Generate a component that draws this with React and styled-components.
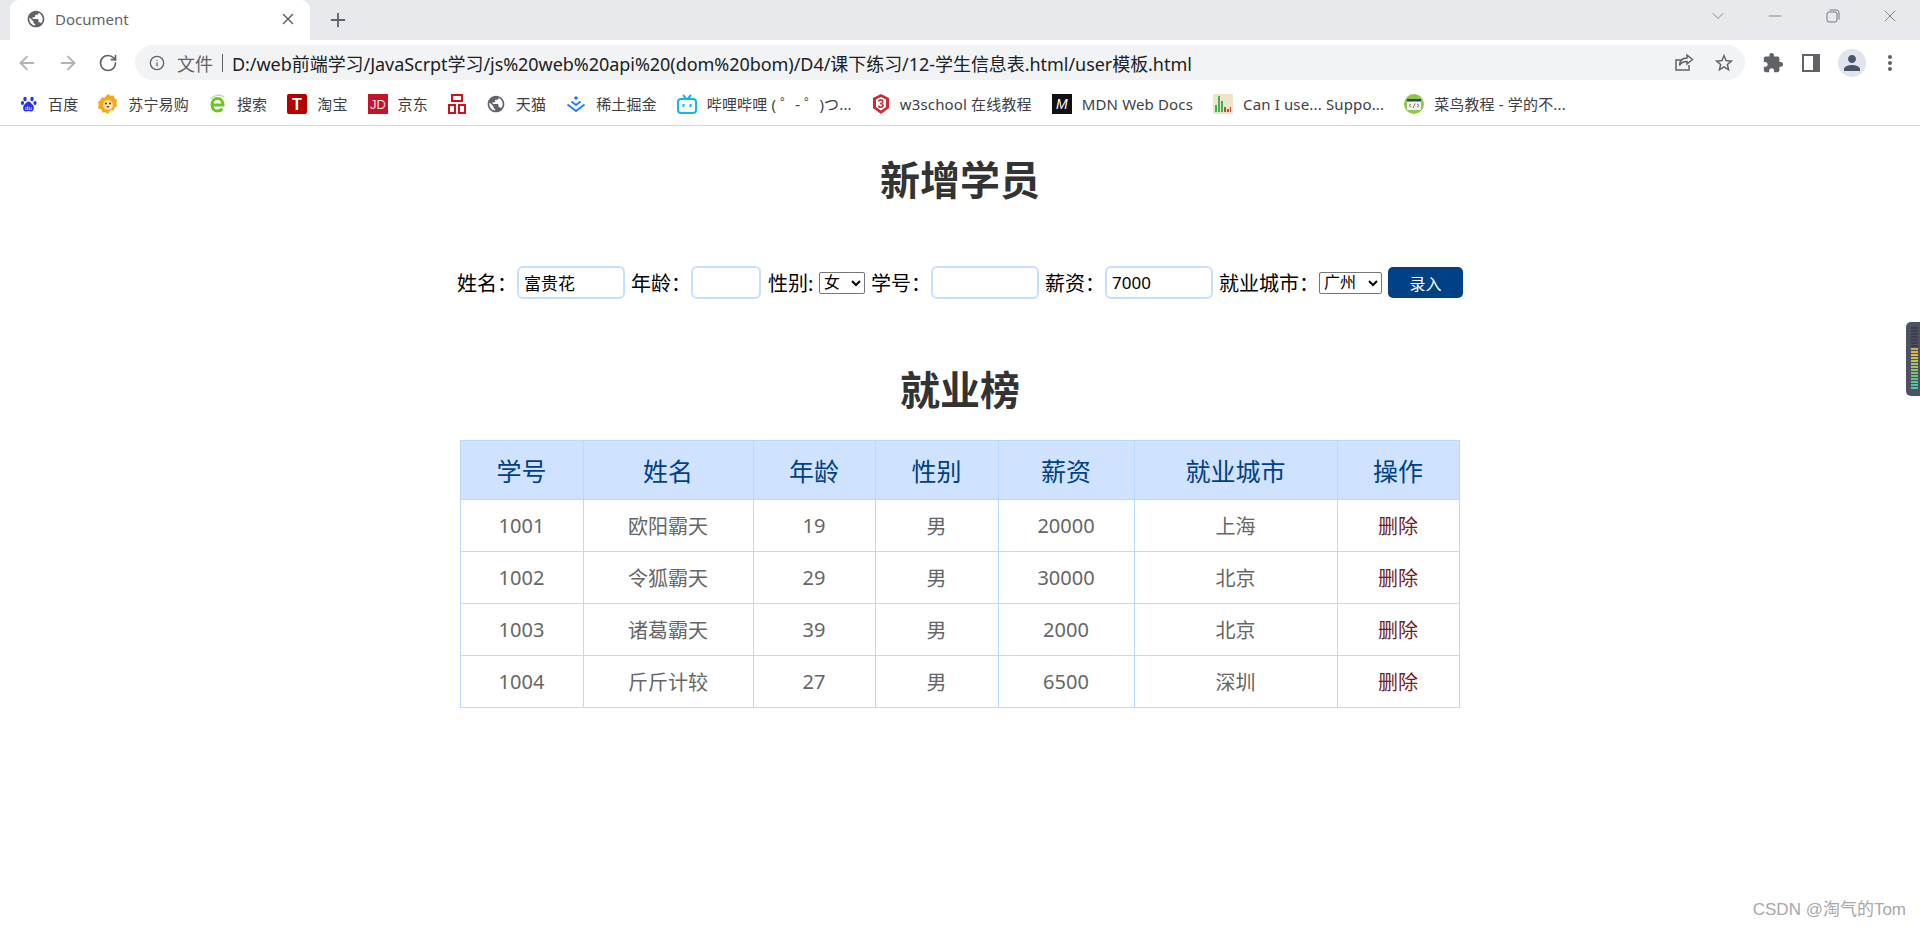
import React from 'react';
import styled, { createGlobalStyle } from 'styled-components';
import { ArrowLeft, ArrowRight, RotateCw, Info, Plus, X, ChevronDown, Minus } from 'lucide-react';
import { MdPublic, MdExtension, MdStarBorder, MdPerson, MdMoreVert } from 'react-icons/md';

const GlobalStyle = createGlobalStyle`
  html, body {
    margin: 0;
    height: 100%;
    overflow: hidden;
    background: #fff;
    font-family: "Noto Sans", "Noto Sans CJK SC", sans-serif;
  }
  * { box-sizing: border-box; }
`;

const Window = styled.div`
  position: relative;
  width: 1920px;
  height: 928px;
  overflow: hidden;
`;

const TabStrip = styled.div`
  display: flex;
  align-items: center;
  height: 40px;
  padding-left: 10px;
  background: #e7e9ed;
`;

const Tab = styled.div`
  display: flex;
  align-items: center;
  width: 300px;
  height: 40px;
  padding: 0 13px 3px 16px;
  background: #fff;
  border-radius: 9px 9px 0 0;
  color: #5f6368;
  font-size: 15px;
`;

const TabTitle = styled.span`
  flex: 1;
  margin-left: 9px;
`;

const NewTab = styled.div`
  display: flex;
  margin-left: 17px;
  color: #5f6368;
`;

const WindowControls = styled.div`
  display: flex;
  align-items: center;
  margin-left: auto;
  padding: 0 20px 8px 0;
  gap: 37px;
  color: #72767b;
`;

const RestoreSlot = styled.span`
  display: flex;
  margin: 0 3px 0 4px;
`;

const Toolbar = styled.div`
  display: flex;
  align-items: center;
  height: 45px;
  padding: 0 18px 0 16px;
  background: #fff;
`;

const NavButton = styled.div`
  display: flex;
  width: 22px;
  margin-right: ${p => p.$gap}px;
  color: ${p => (p.$off ? '#b1b3b6' : '#5f6368')};
`;

const Omnibox = styled.div`
  display: flex;
  align-items: center;
  width: 1610px;
  height: 35px;
  padding: 0 10px 0 14px;
  border-radius: 18px;
  background: #f1f3f4;
  color: #202124;
  font-size: 18px;
`;

const Scheme = styled.span`
  margin-left: 12px;
  color: #5f6368;
`;

const Divider = styled.span`
  width: 1px;
  height: 18px;
  margin: 0 9px 0 9px;
  background: #5f6368;
`;

const Url = styled.span`
  flex: 1;
  letter-spacing: -0.05px;
  white-space: nowrap;
`;

const OmniActions = styled.div`
  display: flex;
  align-items: center;
  gap: 19px;
  color: #5f6368;
`;

const ToolActions = styled.div`
  display: flex;
  align-items: center;
  margin-left: 17px;
  gap: 18px;
  color: #5f6368;
`;

const MoreButton = styled(MdMoreVert)`
  margin-left: -6px;
`;

const Avatar = styled.div`
  display: flex;
  align-items: center;
  justify-content: center;
  width: 28px;
  height: 28px;
  border-radius: 50%;
  background: #e1e4ea;
  color: #48546a;
`;

const BookmarkBar = styled.div`
  display: flex;
  align-items: center;
  height: 41px;
  padding: 0 0 3px 20px;
  gap: 20px;
  border-bottom: 1px solid #d5d6d8;
  background: #fff;
`;

const Bookmark = styled.div`
  display: flex;
  align-items: center;
  gap: 10px;
  color: #3c4043;
  font-size: 15px;
  letter-spacing: 0.15px;
  white-space: nowrap;
`;

const Page = styled.main`
  display: flex;
  flex-direction: column;
  align-items: center;
`;

const Title = styled.h1`
  margin: ${p => p.$top}px 0 ${p => p.$bottom}px;
  color: #333;
  font-size: 40px;
  font-weight: 700;
  line-height: 56px;
`;

const EntryForm = styled.form`
  display: flex;
  align-items: center;
  gap: 6px;
  height: 33px;
  color: #000;
  font-size: 20px;
`;

const FieldLabel = styled.label`
  width: ${p => p.$w}px;
  margin-left: ${p => p.$lead || 0}px;
  white-space: nowrap;
`;

const TextInput = styled.input`
  width: ${p => p.$w}px;
  height: 33px;
  padding: 0 5px;
  border: 2px solid #c5e0ff;
  border-radius: 6px;
  outline: none;
  color: #000;
  font: 17px "Noto Sans", "Noto Sans CJK SC", sans-serif;
`;

const Select = styled.select`
  width: ${p => p.$w}px;
  height: 22px;
  padding: 0;
  border: 1px solid #767676;
  border-radius: 2px;
  background: #fff;
  color: #000;
  font: 16px "Liberation Sans", "Noto Sans CJK SC", sans-serif;
`;

const SubmitButton = styled.button`
  width: 75px;
  height: 31px;
  border: none;
  border-radius: 5px;
  background: #004085;
  color: #fff;
  font: 16px "Noto Sans", "Noto Sans CJK SC", sans-serif;
`;

const Table = styled.table`
  width: 999px;
  margin-right: 1px;
  table-layout: fixed;
  border-collapse: collapse;
  text-align: center;
`;

const Column = styled.col`
  width: ${p => p.$w}px;
`;

const HeadCell = styled.th`
  height: 59px;
  padding: 0;
  border: 1px solid #b8daff;
  background: #cfe2ff;
  color: #004085;
  font-size: 25px;
  font-weight: 400;
`;

const Cell = styled.td`
  height: 52px;
  padding: 0;
  border: 1px solid #b8daff;
  color: #666;
  font-size: 20px;
`;

const DeleteLink = styled.a`
  color: #721c24;
`;

const Watermark = styled.div`
  position: absolute;
  right: 14px;
  bottom: 8px;
  color: #a8a8a8;
  font: 17px "Liberation Sans", "Noto Sans CJK SC", sans-serif;
`;

const SideWidget = styled.div`
  position: absolute;
  top: 322px;
  right: 0;
  display: flex;
  flex-direction: column;
  gap: 1px;
  width: 14px;
  height: 74px;
  padding: 5px 2px 0 5px;
  border-radius: 5px 0 0 5px;
  background: #4c5260;
`;

const Level = styled.span`
  height: 2px;
  background: ${p => p.$c};
`;

const levels = [
  '#3a3f4b', '#3a3f4b', '#3a3f4b', '#3a3f4b', '#3a3f4b', '#3a3f4b', '#3a3f4b',
  '#e0a93e', '#e3b23f', '#e0bb3f', '#c9c247', '#bfc54e', '#abc158', '#9dc35f',
  '#8ac168', '#79c472', '#6cc47c', '#5cc688', '#50c896', '#47caa4', '#44cbb0',
];

const BaiduIcon = () => (
  <svg width="18" height="18" viewBox="0 0 18 18" fill="#2932e1">
    <ellipse cx="5" cy="4" rx="1.7" ry="2.3" />
    <ellipse cx="12" cy="4" rx="1.7" ry="2.3" />
    <ellipse cx="2.500" cy="8" rx="1.6" ry="2" />
    <ellipse cx="15" cy="8" rx="1.6" ry="2" />
    <path d="M8.500 6.500c2 0 2.500 2 4 3 2 1.600 2 7-1.500 7-1 0-1.500-.4-2.500-.4s-1.500.4-2.500.4c-3.500 0-3.500-5.400-1.500-7 1.500-1 2-3 4-3z" />
    <text x="8.500" y="15" textAnchor="middle" fill="#fff" fontSize="6" fontFamily="Liberation Sans">du</text>
  </svg>
);

const SuningIcon = () => (
  <svg width="20" height="20" viewBox="0 0 20 20">
    <path fill="#f9a80f" d="M10 0l2.500 1.800 3-.3 1 2.800 2.500 1.700-.8 3 .8 3-2.500 1.700-1 2.800-3-.3L10 20l-2.500-1.800-3 .3-1-2.800L0 14l.8-3-.8-3 2.500-1.700 1-2.800 3 .3z" />
    <circle cx="10" cy="11" r="5" fill="#fde3b0" />
    <circle cx="8" cy="9.500" r="1" fill="#5a3200" />
    <circle cx="12" cy="9.500" r="1" fill="#5a3200" />
    <path fill="#5a3200" d="M8.500 12h3l-1.500 2z" />
  </svg>
);

const SearchIcon = () => (
  <svg width="18" height="20" viewBox="0 0 18 20" fill="none">
    <path stroke="#6cc520" strokeWidth="3" d="M3 11h11c0-4-2.500-6.500-5.500-6.500S3 7 3 11c0 4 2.500 6 5.500 6 2 0 3.500-.8 5-2" />
    <path stroke="#b7e38a" strokeWidth="1.500" d="M2 5C5 1 11 0 15 3" />
  </svg>
);

const TaobaoIcon = () => (
  <svg width="20" height="20" viewBox="0 0 20 20">
    <rect width="20" height="20" rx="2" fill="#b50000" />
    <text x="10" y="16" textAnchor="middle" fill="#fff" fontSize="16" fontWeight="700" fontFamily="Liberation Sans">T</text>
  </svg>
);

const JdIcon = () => (
  <svg width="20" height="20" viewBox="0 0 20 20">
    <rect width="20" height="20" fill="#c4132a" />
    <text x="10" y="15" textAnchor="middle" fill="#f5dfe0" fontSize="13" fontFamily="Liberation Sans">JD</text>
  </svg>
);

const PinIcon = () => (
  <svg width="18" height="20" viewBox="0 0 18 20" fill="none" stroke="#d0111b" strokeWidth="2">
    <rect x="4" y="1" width="10" height="6" />
    <rect x="1" y="11" width="6" height="8" />
    <rect x="11" y="11" width="6" height="8" />
  </svg>
);

const JuejinIcon = () => (
  <svg width="20" height="18" viewBox="0 0 20 18" fill="none" stroke="#1e80ff" strokeWidth="2">
    <path fill="#1e80ff" stroke="none" d="M10 1l2.500 2L10 5 7.500 3z" />
    <path d="M5.500 6.500L10 10l4.500-3.500" />
    <path d="M1.500 9.500L10 16l8.500-6.500" />
  </svg>
);

const BilibiliIcon = () => (
  <svg width="20" height="20" viewBox="0 0 20 20" fill="none" stroke="#12b7e6" strokeWidth="2">
    <rect x="1" y="5" width="18" height="14" rx="3" />
    <path d="M6 1l3 3.500M14 1l-3 3.500" />
    <path d="M6.500 10v3M13.500 10v3" />
  </svg>
);

const W3Icon = () => (
  <svg width="18" height="20" viewBox="0 0 18 20">
    <path fill="#c92c34" d="M9 0l8 4v10l-8 6-8-6V4z" />
    <path fill="#fff" d="M9 3l5 2.500v7.500l-5 3.500-5-3.500V5.500z" />
    <text x="9" y="14" textAnchor="middle" fill="#c92c34" fontSize="12" fontWeight="700" fontFamily="Liberation Sans">3</text>
  </svg>
);

const MdnIcon = () => (
  <svg width="20" height="20" viewBox="0 0 20 20">
    <rect width="20" height="20" fill="#111" />
    <text x="10" y="15" textAnchor="middle" fill="#fff" fontSize="14" fontStyle="italic" fontFamily="Liberation Sans">M</text>
  </svg>
);

const CanIUseIcon = () => (
  <svg width="20" height="20" viewBox="0 0 20 20">
    <rect width="20" height="20" fill="#eee3cd" />
    <path fill="#3eb54a" d="M2 11h2v7H2zM5 2h2v16H5zM8 7h2v11H8z" />
    <path fill="#d2423a" d="M11 13h2v5h-2zM14 15h2v3h-2zM17 13h1v5h-1z" />
  </svg>
);

const RunoobIcon = () => (
  <svg width="20" height="20" viewBox="0 0 20 20">
    <circle cx="10" cy="10" r="10" fill="#8fc64f" />
    <rect x="3" y="5" width="14" height="11" fill="#f2f2ee" />
    <rect x="3" y="5" width="14" height="2.500" fill="#33465a" />
    <path stroke="#777" fill="none" d="M7 10l-2 1.500L7 13M13 10l2 1.500-2 1.500M11 9.500l-2 4.500" />
  </svg>
);

const ShareIcon = () => (
  <svg width="20" height="20" viewBox="0 0 20 20" fill="none" stroke="#5f6368" strokeWidth="1.500">
    <path d="M15 12v5H2V7h5" />
    <path d="M13 2l5.500 4.500L13 11V8.500c-3.500 0-6 1-7.500 4 .2-4.500 3-7.500 7.500-7.500z" />
  </svg>
);

const SidePanelIcon = () => (
  <svg width="18" height="18" viewBox="0 0 18 18" fill="#5f6368">
    <path fillRule="evenodd" d="M0 0h18v18H0zM2 2v14h9V2z" />
  </svg>
);

const RestoreIcon = () => (
  <svg width="14" height="14" viewBox="0 0 14 14" fill="none" stroke="#72767b">
    <rect x="1" y="3" width="10" height="10" rx="2" />
    <path d="M3.500 1H10a3 3 0 0 1 3 3v6.500" />
  </svg>
);

const bookmarks = [
  { label: '百度', icon: <BaiduIcon /> },
  { label: '苏宁易购', icon: <SuningIcon /> },
  { label: '搜索', icon: <SearchIcon /> },
  { label: '淘宝', icon: <TaobaoIcon /> },
  { label: '京东', icon: <JdIcon /> },
  { label: '', icon: <PinIcon /> },
  { label: '天猫', icon: <MdPublic size={20} color="#5f6368" /> },
  { label: '稀土掘金', icon: <JuejinIcon /> },
  { label: '哔哩哔哩 ( ゜- ゜)つ...', icon: <BilibiliIcon /> },
  { label: 'w3school 在线教程', icon: <W3Icon /> },
  { label: 'MDN Web Docs', icon: <MdnIcon /> },
  { label: 'Can I use... Suppo...', icon: <CanIUseIcon /> },
  { label: '菜鸟教程 - 学的不...', icon: <RunoobIcon /> },
];

const columns = [
  { label: '学号', width: 123 },
  { label: '姓名', width: 170 },
  { label: '年龄', width: 122 },
  { label: '性别', width: 123 },
  { label: '薪资', width: 136 },
  { label: '就业城市', width: 203 },
  { label: '操作', width: 122 },
];

const students = [
  ['1001', '欧阳霸天', '19', '男', '20000', '上海'],
  ['1002', '令狐霸天', '29', '男', '30000', '北京'],
  ['1003', '诸葛霸天', '39', '男', '2000', '北京'],
  ['1004', '斤斤计较', '27', '男', '6500', '深圳'],
];

const App = () => (
  <Window>
    <GlobalStyle />
    <TabStrip>
      <Tab>
        <MdPublic size={20} color="#5f6368" />
        <TabTitle>Document</TabTitle>
        <X size={18} color="#5f6368" />
      </Tab>
      <NewTab><Plus size={22} /></NewTab>
      <WindowControls>
        <ChevronDown size={20} strokeWidth={1} />
        <Minus size={20} strokeWidth={1} />
        <RestoreSlot><RestoreIcon /></RestoreSlot>
        <X size={20} strokeWidth={1} />
      </WindowControls>
    </TabStrip>

    <Toolbar>
      <NavButton $off $gap={19}><ArrowLeft size={22} /></NavButton>
      <NavButton $off $gap={19}><ArrowRight size={22} /></NavButton>
      <NavButton $gap={15}><RotateCw size={20} /></NavButton>
      <Omnibox>
        <Info size={16} color="#5f6368" />
        <Scheme>文件</Scheme>
        <Divider />
        <Url>D:/web前端学习/JavaScrpt学习/js%20web%20api%20(dom%20bom)/D4/课下练习/12-学生信息表.html/user模板.html</Url>
        <OmniActions>
          <ShareIcon />
          <MdStarBorder size={22} />
        </OmniActions>
      </Omnibox>
      <ToolActions>
        <MdExtension size={22} />
        <SidePanelIcon />
        <Avatar><MdPerson size={24} /></Avatar>
        <MoreButton size={24} />
      </ToolActions>
    </Toolbar>

    <BookmarkBar>
      {bookmarks.map((item, index) => (
        <Bookmark key={index}>
          {item.icon}
          {item.label && <span>{item.label}</span>}
        </Bookmark>
      ))}
    </BookmarkBar>

    <Page>
      <Title $top={26} $bottom={58}>新增学员</Title>
      <EntryForm>
        <FieldLabel $w={54}>姓名：</FieldLabel>
        <TextInput $w={108} defaultValue="富贵花" />
        <FieldLabel $w={54}>年龄：</FieldLabel>
        <TextInput $w={70} />
        <FieldLabel $w={45} $lead={1}>性别:</FieldLabel>
        <Select $w={46} defaultValue="女">
          <option>男</option>
          <option>女</option>
        </Select>
        <FieldLabel $w={54}>学号：</FieldLabel>
        <TextInput $w={108} />
        <FieldLabel $w={54}>薪资：</FieldLabel>
        <TextInput $w={108} defaultValue="7000" />
        <FieldLabel $w={94}>就业城市：</FieldLabel>
        <Select $w={63} defaultValue="广州">
          <option>北京</option>
          <option>上海</option>
          <option>广州</option>
          <option>深圳</option>
        </Select>
        <SubmitButton type="button">录入</SubmitButton>
      </EntryForm>

      <Title $top={63} $bottom={22}>就业榜</Title>
      <Table>
        <colgroup>
          {columns.map(col => <Column key={col.label} $w={col.width} />)}
        </colgroup>
        <thead>
          <tr>
            {columns.map(col => <HeadCell key={col.label}>{col.label}</HeadCell>)}
          </tr>
        </thead>
        <tbody>
          {students.map(row => (
            <tr key={row[0]}>
              {row.map((value, index) => <Cell key={index}>{value}</Cell>)}
              <Cell><DeleteLink>删除</DeleteLink></Cell>
            </tr>
          ))}
        </tbody>
      </Table>
    </Page>

    <SideWidget>
      {levels.map((color, index) => <Level key={index} $c={color} />)}
    </SideWidget>
    <Watermark>CSDN @淘气的Tom</Watermark>
  </Window>
);

export default App;
